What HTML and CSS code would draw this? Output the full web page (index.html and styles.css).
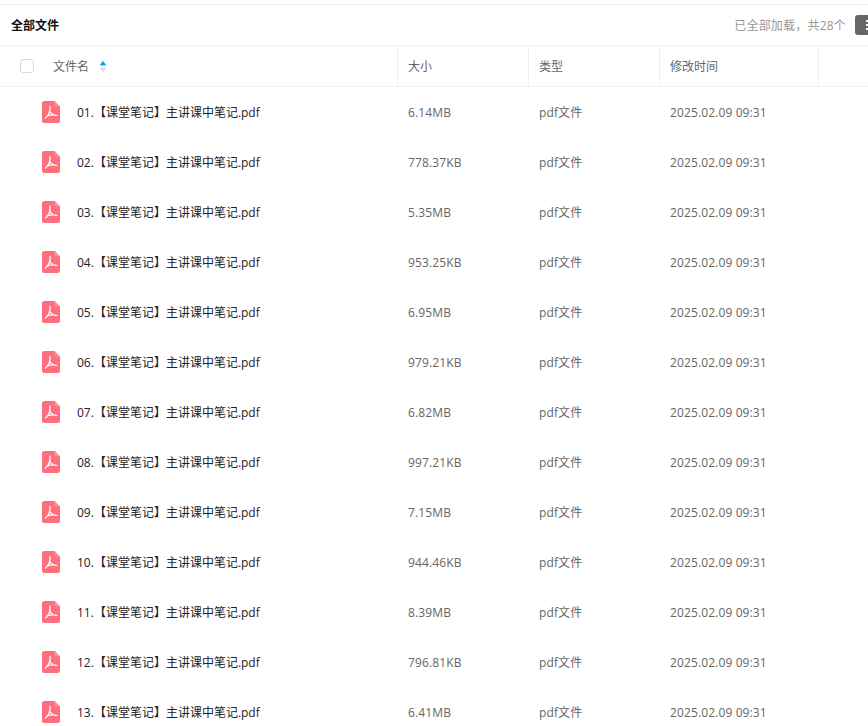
FILE: index.html
```html
<!DOCTYPE html>
<html lang="zh-CN">
<head>
<meta charset="utf-8">
<title>全部文件</title>
<link rel="stylesheet" href="styles.css">
</head>
<body>
<svg class="defs" width="0" height="0" aria-hidden="true">
  <symbol id="pdf" viewBox="0 0 18 22">
    <path d="M2.500 0H12.500L18 5.500V19.500a2.500 2.500 0 0 1-2.500 2.500H2.500a2.500 2.500 0 0 1-2.500-2.500V2.500a2.500 2.500 0 0 1 2.500-2.500Z" fill="#fe6e7c"/>
    <path d="M12.500 0L18 5.500H14a1.500 1.500 0 0 1-1.500-1.500Z" fill="#ff8e99"/>
    <path d="M8 5C8.600 9.500 7 14 3.500 17M8.300 11C9.500 13 11.500 14.300 14.800 14.500M5 14.800C7.800 14 10.500 13.700 14 14" fill="none" stroke="#fff" stroke-width="1.200" stroke-linecap="round"/>
  </symbol>
</svg>
<main class="page">
  <header class="topbar">
    <h1 class="title">全部文件</h1>
    <div class="status">
      <span class="status-text">已全部加载，共28个</span>
      <span class="view-btn"><i></i><i></i><i></i></span>
    </div>
  </header>
  <div class="grid head">
    <div class="cell name-head">
      <span class="check"></span>
      <span>文件名</span>
      <svg class="sort" viewBox="0 0 8 13" width="8" height="13" aria-hidden="true">
        <path d="M4 1.500L6.500 5H1.500Z" fill="#0a9afc" stroke="#0a9afc" stroke-linejoin="round"/>
        <path d="M4 11.500L6.500 8H1.500Z" fill="#d9dce4" stroke="#d9dce4" stroke-linejoin="round"/>
      </svg>
    </div>
    <div class="cell">大小</div>
    <div class="cell">类型</div>
    <div class="cell">修改时间</div>
    <div class="cell"></div>
  </div>
  <div class="grid row"><div class="name"><svg class="icon"><use href="#pdf"/></svg><span>01.【课堂笔记】主讲课中笔记.pdf</span></div><div class="val">6.14MB</div><div class="val">pdf文件</div><div class="val">2025.02.09 09:31</div></div>
  <div class="grid row"><div class="name"><svg class="icon"><use href="#pdf"/></svg><span>02.【课堂笔记】主讲课中笔记.pdf</span></div><div class="val">778.37KB</div><div class="val">pdf文件</div><div class="val">2025.02.09 09:31</div></div>
  <div class="grid row"><div class="name"><svg class="icon"><use href="#pdf"/></svg><span>03.【课堂笔记】主讲课中笔记.pdf</span></div><div class="val">5.35MB</div><div class="val">pdf文件</div><div class="val">2025.02.09 09:31</div></div>
  <div class="grid row"><div class="name"><svg class="icon"><use href="#pdf"/></svg><span>04.【课堂笔记】主讲课中笔记.pdf</span></div><div class="val">953.25KB</div><div class="val">pdf文件</div><div class="val">2025.02.09 09:31</div></div>
  <div class="grid row"><div class="name"><svg class="icon"><use href="#pdf"/></svg><span>05.【课堂笔记】主讲课中笔记.pdf</span></div><div class="val">6.95MB</div><div class="val">pdf文件</div><div class="val">2025.02.09 09:31</div></div>
  <div class="grid row"><div class="name"><svg class="icon"><use href="#pdf"/></svg><span>06.【课堂笔记】主讲课中笔记.pdf</span></div><div class="val">979.21KB</div><div class="val">pdf文件</div><div class="val">2025.02.09 09:31</div></div>
  <div class="grid row"><div class="name"><svg class="icon"><use href="#pdf"/></svg><span>07.【课堂笔记】主讲课中笔记.pdf</span></div><div class="val">6.82MB</div><div class="val">pdf文件</div><div class="val">2025.02.09 09:31</div></div>
  <div class="grid row"><div class="name"><svg class="icon"><use href="#pdf"/></svg><span>08.【课堂笔记】主讲课中笔记.pdf</span></div><div class="val">997.21KB</div><div class="val">pdf文件</div><div class="val">2025.02.09 09:31</div></div>
  <div class="grid row"><div class="name"><svg class="icon"><use href="#pdf"/></svg><span>09.【课堂笔记】主讲课中笔记.pdf</span></div><div class="val">7.15MB</div><div class="val">pdf文件</div><div class="val">2025.02.09 09:31</div></div>
  <div class="grid row"><div class="name"><svg class="icon"><use href="#pdf"/></svg><span>10.【课堂笔记】主讲课中笔记.pdf</span></div><div class="val">944.46KB</div><div class="val">pdf文件</div><div class="val">2025.02.09 09:31</div></div>
  <div class="grid row"><div class="name"><svg class="icon"><use href="#pdf"/></svg><span>11.【课堂笔记】主讲课中笔记.pdf</span></div><div class="val">8.39MB</div><div class="val">pdf文件</div><div class="val">2025.02.09 09:31</div></div>
  <div class="grid row"><div class="name"><svg class="icon"><use href="#pdf"/></svg><span>12.【课堂笔记】主讲课中笔记.pdf</span></div><div class="val">796.81KB</div><div class="val">pdf文件</div><div class="val">2025.02.09 09:31</div></div>
  <div class="grid row"><div class="name"><svg class="icon"><use href="#pdf"/></svg><span>13.【课堂笔记】主讲课中笔记.pdf</span></div><div class="val">6.41MB</div><div class="val">pdf文件</div><div class="val">2025.02.09 09:31</div></div>
</main>
</body>
</html>
```
FILE: styles.css
```css
html, body {
  margin: 0;
  height: 100%;
  overflow: hidden;
  background: #fff;
}
body {
  font-family: "Open Sans", "Noto Sans CJK SC", sans-serif;
  font-size: 12px;
  color: #666;
}
.defs { position: absolute; }
.page {
  width: 868px;
  padding-top: 4px;
}
.topbar {
  display: flex;
  justify-content: space-between;
  align-items: center;
  height: 40px;
  border-top: 1px solid #f2f2f2;
  border-bottom: 1px solid #f0f0f0;
  padding-left: 11px;
}
.title {
  margin: 0;
  font-size: 12px;
  font-weight: 700;
  color: #111;
}
.status {
  display: flex;
  align-items: center;
  gap: 9px;
  color: #999;
  margin-right: -15px;
}
.status-text { letter-spacing: 0.2px; }
.view-btn {
  width: 28px;
  height: 20px;
  background: #666;
  border-radius: 3px;
  display: flex;
  flex-direction: column;
  justify-content: center;
  gap: 2px;
  padding-left: 11px;
  box-sizing: border-box;
}
.view-btn i {
  display: block;
  width: 10px;
  height: 2px;
  background: #fff;
}
.grid {
  display: grid;
  grid-template-columns: 398px 131px 131px 159px 49px;
}
.head {
  height: 40px;
  border-bottom: 1px solid #f0f0f0;
}
.cell {
  display: flex;
  align-items: center;
  padding-left: 10px;
  border-right: 1px solid #f0f0f0;
  box-sizing: border-box;
}
.cell:last-child { border-right: 0; }
.name-head { padding-left: 20px; }
.check {
  width: 12px;
  height: 12px;
  border: 1px solid #d9d9d9;
  border-radius: 3px;
  margin-right: 19px;
}
.sort {
  margin-left: 10px;
}
.row {
  height: 50px;
  align-items: center;
}
.name {
  display: flex;
  align-items: center;
  padding-left: 42px;
  color: #222;
}
.icon {
  width: 18px;
  height: 22px;
  margin-right: 17px;
}
.val {
  padding-left: 10px;
  letter-spacing: 0.12px;
}
```
